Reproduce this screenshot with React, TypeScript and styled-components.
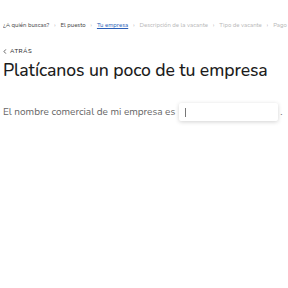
import React from "react";
import styled, { createGlobalStyle } from "styled-components";

const Global = createGlobalStyle`
  html, body { margin: 0; padding: 0; background: #fff; }
  body { font-family: "Nunito", "Lato", "Noto Sans", sans-serif; }
`;

const Page = styled.div`
  width: 288px;
  height: 288px;
  overflow: hidden;
  padding: 0 0 0 3px;
  box-sizing: border-box;
`;

const Crumbs = styled.nav`
  display: flex;
  align-items: center;
  white-space: nowrap;
  gap: 5px;
  padding-top: 21px;
  height: 8px;
  font-size: 6px;
  overflow: hidden;
`;

const Crumb = styled.span<{ $state: "done" | "active" | "todo" }>`
  color: ${(p) => (p.$state === "done" ? "#444" : p.$state === "active" ? "#2b5fb8" : "#b8b8b8")};
  text-decoration: ${(p) => (p.$state === "active" ? "underline" : "none")};
`;

const Sep = styled.span`
  color: #999;
  font-size: 5px;
`;

const Back = styled.div`
  margin-top: 18px;
  display: flex;
  align-items: center;
  gap: 3px;
  font-size: 6px;
  letter-spacing: 0.5px;
  color: #333;
  font-weight: 600;
`;

const Title = styled.h1`
  margin: 3px 0 0;
  font-size: 17.6px;
  font-weight: 500;
  color: #1c1c1c;
  letter-spacing: -0.1px;
  white-space: nowrap;
`;

const Sentence = styled.div`
  margin-top: 21px;
  display: flex;
  align-items: center;
  white-space: nowrap;
  font-size: 10px;
  color: #666;
`;

const Field = styled.div`
  width: 99px;
  height: 18px;
  flex: none;
  margin: 0 2px 0 4px;
  border-radius: 2px;
  background: #fff;
  box-shadow: 0 1px 4px rgba(0, 0, 0, 0.18);
  display: flex;
  align-items: center;
  padding-left: 6px;
  box-sizing: border-box;
`;

const Caret = styled.span`
  width: 1px;
  height: 9px;
  background: #777;
`;

const steps: { label: string; state: "done" | "active" | "todo" }[] = [
  { label: "¿A quién buscas?", state: "done" },
  { label: "El puesto", state: "done" },
  { label: "Tu empresa", state: "active" },
  { label: "Descripción de la vacante", state: "todo" },
  { label: "Tipo de vacante", state: "todo" },
  { label: "Pago", state: "todo" },
];

export default function App() {
  return (
    <Page>
      <Global />
      <Crumbs>
        {steps.map((s, i) => (
          <React.Fragment key={s.label}>
            {i > 0 && <Sep>›</Sep>}
            <Crumb $state={s.state}>{s.label}</Crumb>
          </React.Fragment>
        ))}
      </Crumbs>
      <Back>
        <svg width="4" height="5" viewBox="0 0 4 6">
          <path d="M3 0.5 L0.8 3 L3 5.5" fill="none" stroke="#333" strokeWidth="0.9" />
        </svg>
        ATRÁS
      </Back>
      <Title>Platícanos un poco de tu empresa</Title>
      <Sentence>
        El nombre comercial de mi empresa es
        <Field>
          <Caret />
        </Field>
        <span>.</span>
      </Sentence>
    </Page>
  );
}
